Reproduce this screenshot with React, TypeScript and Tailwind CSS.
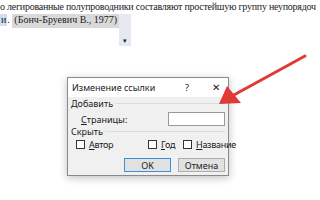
import React from "react";

function Checkbox({ label, u }: { label: string; u: string }) {
  return (
    <div className="flex shrink-0 items-center gap-[4px]">
      <span className="h-[9px] w-[9px] shrink-0 border border-[#333] bg-white" />
      <span>
        <span className="underline">{u}</span>
        {label}
      </span>
    </div>
  );
}

function Arrow() {
  return (
    <svg className="absolute left-0 top-0" width="320" height="200" viewBox="0 0 320 200">
      <line x1="305" y1="56" x2="232" y2="96" stroke="#e03a34" strokeWidth="3" strokeLinecap="round" />
      <polygon points="219,104 227,86 241,103" fill="#e03a34" />
    </svg>
  );
}

export default function App() {
  return (
    <div className="relative h-[200px] w-[320px] overflow-hidden bg-white">
      <div
        className="pt-[1px] text-[10px] leading-[12px] text-[#222] whitespace-nowrap"
        style={{ fontFamily: '"Liberation Serif", serif' }}
      >
        <div className="tracking-[-0.25px]">о легированные полупроводники составляют простейшую группу неупорядоч</div>
        <div className="mt-[1px] flex items-start">
          <span className="bg-[#cfe0f3] px-[1px]">и</span>
          <span>.&nbsp;</span>
          <span className="bg-[#d9d9d9] px-[2px] pb-[2px]">(Бонч-Бруевич В., 1977)</span>
          <div className="flex h-[32px] w-[12px] items-end justify-center bg-[#e7e9f2] pb-[1px] text-[7px] leading-[8px]">▾</div>
        </div>
      </div>

      <div
        className="ml-[67px] mt-[31px] w-[162px] border border-[#8a8a8a] bg-[#f0f0f0] text-[9px] leading-[11px] text-[#1a1a1a] shadow-[0_2px_8px_rgba(0,0,0,0.25)]"
        style={{ fontFamily: '"Noto Sans", sans-serif' }}
      >
        <div className="flex h-[19px] items-center bg-white pl-[4px] pr-[8px]">
          <span className="flex-1">Изменение ссылки</span>
          <span className="mr-[23px]">?</span>
          <span className="text-[10px]">✕</span>
        </div>
        <div className="px-[3px] pb-[3px] pt-[1px]">
          <div className="flex items-center gap-[2px]">
            <span>Добавить</span>
            <span className="h-px flex-1 bg-[#dcdcdc]" />
          </div>
          <div className="mt-[3px] flex items-center pl-[10px]">
            <span className="flex-1">
              <span className="underline">С</span>траницы:
            </span>
            <span className="h-[14px] w-[57px] border border-[#9a9a9a] bg-white" />
          </div>
          <div className="flex items-center gap-[2px]">
            <span>Скрыть</span>
            <span className="h-px flex-1 bg-[#dcdcdc]" />
          </div>
          <div className="mt-[2px] flex items-center pl-[5px] tracking-[-0.3px]">
            <div className="w-[72px] shrink-0">
              <Checkbox u="А" label="втор" />
            </div>
            <div className="w-[35px] shrink-0">
              <Checkbox u="Г" label="од" />
            </div>
            <Checkbox u="Н" label="азвание" />
          </div>
          <div className="mt-[8px] flex justify-end gap-[7px]">
            <div className="flex h-[14px] w-[47px] shrink-0 items-center justify-center border border-[#3c8fd9] bg-[#e1e1e1]">OK</div>
            <div className="flex h-[14px] w-[47px] shrink-0 items-center justify-center border border-[#adadad] bg-[#e1e1e1]">Отмена</div>
          </div>
        </div>
      </div>
      <Arrow />
    </div>
  );
}
